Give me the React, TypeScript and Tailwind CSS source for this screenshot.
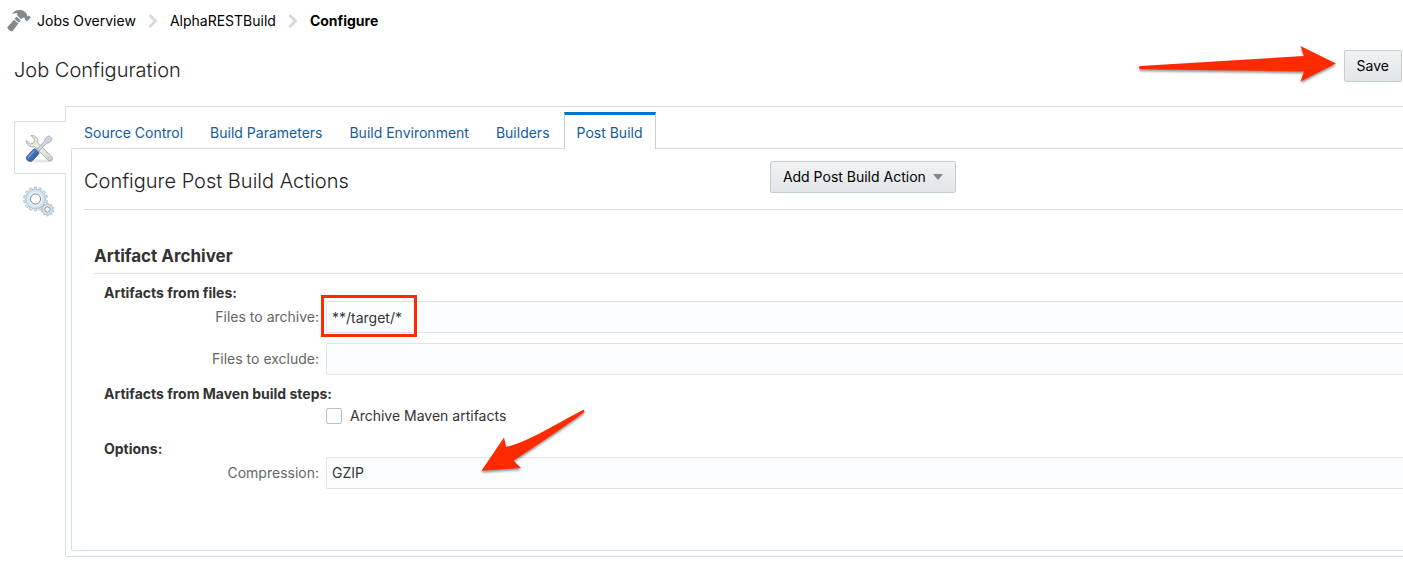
import { useState } from "react";

const tabs = ["Source Control", "Build Parameters", "Build Environment", "Builders", "Post Build"];

function HammerIcon() {
  return (
    <svg width="24" height="24" viewBox="0 0 24 24" fill="#83898c" aria-hidden="true">
      <path d="M4.800 5.200C6.500 2.200 9.500 .8 13 .9c2.800.1 5.700 1.600 6.900 4.400.3 1 .1 1.700.6 2.200l1.500-.9 1.800 1.900-3.800 3.800-2.300-1.900.3-1.400-1.600-.6-2.400 1.800-4-4.200.6-1.400C9 3.800 7 4.100 4.800 5.200Z" />
      <path d="m9.500 7.500 4.400 4.300-2 1.900-4.400-3.900Z" />
      <path d="m7 10.800 4.400 3.800-6.200 7.800c-1.700.2-4.700-2.200-4.900-4.100Z" />
    </svg>
  );
}

function Chevron() {
  return (
    <svg width="10" height="14" viewBox="0 0 10 14" fill="none" stroke="#d6d9db" strokeWidth="2.800" aria-hidden="true">
      <path d="m1.500 1 6 6-6 6" />
    </svg>
  );
}

function ToolsIcon() {
  return (
    <svg width="32" height="32" viewBox="0 0 32 32" aria-hidden="true">
      <defs>
        <linearGradient id="steel" x1="0" y1="0" x2="1" y2="1">
          <stop offset="0" stopColor="#d3d3d1" />
          <stop offset=".5" stopColor="#f3f3f2" />
          <stop offset="1" stopColor="#c9c9c7" />
        </linearGradient>
        <linearGradient id="handle" x1="0" y1="0" x2="1" y2="1">
          <stop offset="0" stopColor="#88aada" />
          <stop offset=".45" stopColor="#4475b8" />
          <stop offset="1" stopColor="#214f94" />
        </linearGradient>
      </defs>
      <ellipse cx="16" cy="28" rx="14" ry="1.500" fill="#e4e4e4" />
      <path d="M8 2.500c3-.7 6.700 1.800 6.900 5.100l-.2 2.500 14.200 13.600c2 2.600-1.300 5.700-3.700 3.700L11.500 13.500C7.500 15 3.200 12 3.400 7.500L7.200 11l3.600-1 .6-3.600Z" fill="url(#steel)" stroke="#aaaaa8" strokeWidth=".9" />
      <circle cx="26.500" cy="25.700" r="1" fill="#fff" stroke="#aaa" strokeWidth=".6" />
      <path d="m13.500 16.500 8-8.400c.2-2.200 2-4.500 4.600-5.200l2.800 2.200c.3 2.700-2.100 5-5 5.100l-8.200 8.300Z" fill="#cbd4df" stroke="#95a4b8" strokeWidth=".8" />
      <path d="m11.700 15.500 4.600 4.300-1.700 2.400-5.200 5.600c-2 1.700-7-.5-6-3.900l5.700-6.300Z" fill="url(#handle)" stroke="#365f9e" strokeWidth=".8" />
      <path d="m10.800 18.500-5.600 6" stroke="#9ebce4" strokeWidth="1" />
    </svg>
  );
}

function Gear({ cx, cy, r, teeth }: { cx: number; cy: number; r: number; teeth: number }) {
  const step = 360 / teeth;
  return (
    <g transform={`translate(${cx} ${cy})`} stroke="#a3b7c8" strokeWidth=".7">
      {Array.from({ length: teeth }, (_, i) => (
        <rect key={i} x={-r * 0.11} y={-r} width={r * 0.22} height={r * 0.35} rx=".4" fill="#dce8f2" transform={`rotate(${i * step})`} />
      ))}
      <circle r={r * 0.8} fill="#dbe7f1" />
      <circle r={r * 0.62} fill="#e9f1f7" stroke="#d3dfe9" />
      <circle r={r * 0.42} fill="#fff" stroke="#7f8d98" strokeWidth="1" />
    </g>
  );
}

function GearsIcon() {
  return (
    <svg width="32" height="32" viewBox="0 0 32 32" aria-hidden="true">
      <Gear cx={12.5} cy={13} r={12} teeth={14} />
      <Gear cx={24.5} cy={23.5} r={6.5} teeth={10} />
    </svg>
  );
}

const field =
  "h-8 min-w-0 flex-1 appearance-none rounded-l-xs border border-r-0 border-[#dfe4e7] bg-[#fcfdfe] px-[5px] text-[#333] outline-none";
const label = "w-[222px] shrink-0 pr-[7px] text-right text-[#666]";

export default function App() {
  const [active, setActive] = useState("Post Build");
  return (
    <div className="relative overflow-hidden bg-white pb-3 font-['Inter','Liberation_Sans',sans-serif] text-sm leading-5 text-[#333]">
      <nav aria-label="Breadcrumb" className="flex h-10 items-center pt-px pl-[7px] text-black">
        <HammerIcon />
        <a href="#jobs" className="ml-[6px]">Jobs Overview</a>
        <span className="mx-3"><Chevron /></span>
        <a href="#build">AlphaRESTBuild</a>
        <span className="mx-3"><Chevron /></span>
        <span className="font-bold">Configure</span>
      </nav>

      <header className="mt-[10px] mb-6 flex h-8 items-center justify-between pr-px pl-[14px]">
        <h1 className="pt-2 text-xl leading-6 font-light text-[#222]">Job Configuration</h1>
        <button className="h-8 rounded-xs border border-[#c4ced7] bg-linear-to-b from-[#f0f2f3] to-[#e2e6e9] px-3 text-black">Save</button>
      </header>

      <div className="flex pl-[14px]">
        <aside className="z-10 -mr-px flex w-[52px] flex-col pt-[15px]">
          <button aria-label="Configuration" className="flex h-[53px] items-center rounded-l-xs border border-r-0 border-[#d6dfe6] bg-white pt-[2px] pl-2">
            <ToolsIcon />
          </button>
          <button aria-label="Settings" className="flex h-[53px] items-center border border-transparent pt-[2px] pl-2">
            <GearsIcon />
          </button>
        </aside>

        <main className="min-w-0 flex-1 rounded-bl-xs border border-r-0 border-[#d6dfe6] pb-[5px] pl-[5px]">
          <div role="tablist" className="relative z-10 -mb-px flex gap-px pt-[5px]">
            {tabs.map((t) => (
              <button
                key={t}
                role="tab"
                aria-selected={t === active}
                onClick={() => setActive(t)}
                className={
                  t === active
                    ? "h-[37px] border-x border-t-3 border-x-[#c4ced7] border-t-[#0572ce] bg-white px-3 pt-[2px] text-[#145c9e]"
                    : "h-[37px] border-x border-t-3 border-transparent px-3 pt-[2px] text-[#145c9e]"
                }
              >
                {t}
              </button>
            ))}
          </div>

          <section className="rounded-l-xs border border-r-0 border-[#d6dfe6] pb-[61px] pl-3">
            <div className="flex items-center border-b border-[#d6dfe6] pt-3 pb-4">
              <h2 className="w-[52%] pt-2 text-xl leading-6 font-light text-[#222]">Configure Post Build Actions</h2>
              <button className="flex h-8 items-center gap-[7px] rounded-xs border border-[#c4ced7] bg-linear-to-b from-[#f0f2f3] to-[#e2e6e9] px-3 text-black">
                Add Post Build Action
                <svg width="10" height="6" viewBox="0 0 10 6" fill="#85898c" aria-hidden="true"><path d="M0 0h10L5 6Z" /></svg>
              </button>
            </div>

            <div className="pl-[10px]">
              <h3 className="mt-[34px] border-b border-[#d9dfe3] pb-[5px] text-[17px] leading-6 font-bold">Artifact Archiver</h3>
              <div className="pt-[9px]">
                <h4 className="pl-[10px] font-bold">Artifacts from files:</h4>
                <div className="-mt-[2px] flex items-center pl-[10px]">
                  <label htmlFor="archive" className={label}>Files to archive:</label>
                  <input id="archive" className={field} defaultValue="**/target/*" />
                </div>
                <div className="mt-[10px] flex items-center pl-[10px]">
                  <label htmlFor="exclude" className={label}>Files to exclude:</label>
                  <input id="exclude" className={field} />
                </div>
                <h4 className="mt-[9px] pl-[10px] font-bold">Artifacts from Maven build steps:</h4>
                <div className="mt-[2px] flex items-center pl-[232px]">
                  <input id="maven" type="checkbox" className="size-4 appearance-none rounded-xs border border-[#b5c0c9] bg-[#fcfdfe]" />
                  <label htmlFor="maven" className="pl-2">Archive Maven artifacts</label>
                </div>
                <h4 className="mt-[13px] pl-[10px] font-bold">Options:</h4>
                <div className="-mt-[2px] flex items-center pl-[10px]">
                  <label htmlFor="compression" className={label}>Compression:</label>
                  <select id="compression" className={field}>
                    <option>GZIP</option>
                  </select>
                </div>
              </div>
            </div>
          </section>
        </main>
      </div>

      <div className="pointer-events-none absolute top-[295px] left-[321px] z-20 h-[42px] w-[96px] border-3 border-[#ff2a00]" />
      <svg className="pointer-events-none absolute top-[40px] right-[63px] z-20 drop-shadow-[0_2px_1px_rgba(0,0,0,0.4)]" width="205" height="50" viewBox="0 0 205 50" fill="#ff2a00" aria-hidden="true">
        <path d="M5.500 26 169 16 165.500 6 201 23.500 165.500 41.500l3.500-10L5.500 29.200a1.600 1.600 0 0 1 0-3.200Z" />
      </svg>
      <svg className="pointer-events-none absolute top-[400px] left-[475px] z-20 drop-shadow-[0_2px_1px_rgba(0,0,0,0.4)]" width="120" height="80" viewBox="0 0 120 80" fill="#ff2a00" aria-hidden="true">
        <path d="M107.500 10.200c1.800-.5 2.600 1 1.200 2.200C84 31 57 48 38.500 60.500l7.500 7.500-39.500 2.800L29 37.500l2 9.300C51 43 80 24.500 107.500 10.200Z" />
      </svg>
    </div>
  );
}
